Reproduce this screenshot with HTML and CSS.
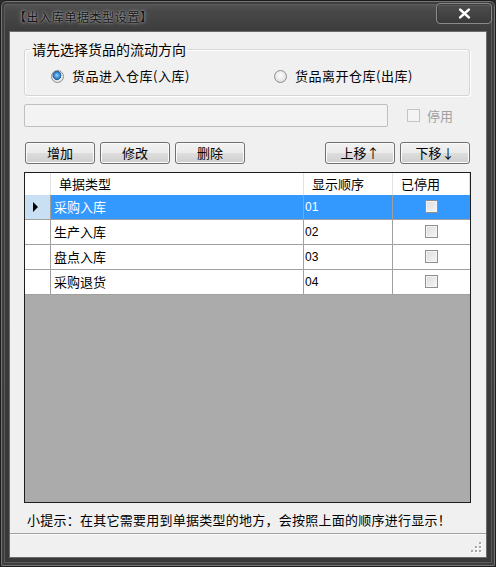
FILE: index.html
```html
<!DOCTYPE html>
<html lang="zh-CN">
<head>
<meta charset="utf-8">
<title>出入库单据类型设置</title>
<link rel="stylesheet" href="styles.css">
</head>
<body>
<div class="win">
  <div class="titlebar">
    <span class="title">【出入库单据类型设置】</span>
    <span class="close"><svg width="13" height="11" viewBox="0 0 13 11"><path d="M2.2 1.6 L10.8 9.4 M10.8 1.6 L2.2 9.4" stroke="#fff" stroke-width="2.6" stroke-linecap="round"/></svg></span>
  </div>
  <div class="client">
    <fieldset class="group">
      <legend>请先选择货品的流动方向</legend>
      <div class="radios">
        <label class="opt"><span class="radio on"></span>货品进入仓库(入库)</label>
        <label class="opt"><span class="radio"></span>货品离开仓库(出库)</label>
      </div>
    </fieldset>
    <div class="namerow">
      <div class="textbox"></div>
      <span class="chk dis"></span><span class="dislabel">停用</span>
    </div>
    <div class="btnrow">
      <button class="btn">增加</button>
      <button class="btn">修改</button>
      <button class="btn">删除</button>
      <span class="spacer"></span>
      <button class="btn">上移↑</button>
      <button class="btn">下移↓</button>
    </div>
    <div class="grid">
      <div class="gtable">
        <div class="hc corner"></div>
        <div class="hc">单据类型</div>
        <div class="hc">显示顺序</div>
        <div class="hc">已停用</div>

        <div class="rh sel"><svg width="6" height="10" viewBox="0 0 6 10"><path d="M0 0 L5 5 L0 10 Z" fill="#000"/></svg></div>
        <div class="dc sel">采购入库</div>
        <div class="dc sel num">01</div>
        <div class="dc sel ck"><span class="chk cell"></span></div>

        <div class="rh"></div>
        <div class="dc">生产入库</div>
        <div class="dc num">02</div>
        <div class="dc ck"><span class="chk cell"></span></div>

        <div class="rh"></div>
        <div class="dc">盘点入库</div>
        <div class="dc num">03</div>
        <div class="dc ck"><span class="chk cell"></span></div>

        <div class="rh"></div>
        <div class="dc">采购退货</div>
        <div class="dc num">04</div>
        <div class="dc ck"><span class="chk cell"></span></div>
      </div>
    </div>
    <div class="tip">小提示：在其它需要用到单据类型的地方，会按照上面的顺序进行显示！</div>
    <div class="status">
      <svg class="grip" width="12" height="12" viewBox="0 0 12 12">
        <g fill="#fff">
          <rect x="9" y="1" width="2" height="2"/><rect x="5" y="5" width="2" height="2"/><rect x="9" y="5" width="2" height="2"/>
          <rect x="1" y="9" width="2" height="2"/><rect x="5" y="9" width="2" height="2"/><rect x="9" y="9" width="2" height="2"/>
        </g>
        <g fill="#a8a8a8">
          <rect x="8" y="0" width="2" height="2"/><rect x="4" y="4" width="2" height="2"/><rect x="8" y="4" width="2" height="2"/>
          <rect x="0" y="8" width="2" height="2"/><rect x="4" y="8" width="2" height="2"/><rect x="8" y="8" width="2" height="2"/>
        </g>
      </svg>
    </div>
  </div>
</div>
</body>
</html>
```
FILE: styles.css
```css
* { box-sizing: border-box; }
html, body { margin: 0; padding: 0; }
body {
  width: 496px;
  height: 567px;
  overflow: hidden;
  background: #2a2a2a;
  font-family: "Noto Sans CJK SC", "Liberation Sans", sans-serif;
  font-size: 13px;
  color: #000;
}
.win {
  width: 496px;
  height: 567px;
  display: flex;
  flex-direction: column;
  padding: 0 9px 9px;
  border: 1px solid #1c1c1c;
  border-radius: 6px 6px 2px 2px;
  background: linear-gradient(#5a5a5a 0, #484848 10px, #3c3c3c 31px, #393939 100%);
  box-shadow: inset 0 0 0 1px #747474, inset 0 0 0 3px #3e3e3e, inset 0 0 0 4px #5a5a5a;
}
.titlebar {
  height: 31px;
  flex: none;
  display: flex;
  align-items: flex-start;
}
.title {
  margin: 7px 0 0 4px;
  font-size: 12px;
  line-height: 17px;
  letter-spacing: 0.6px;
  color: #151515;
  text-shadow: 0 0 2px rgba(190, 190, 190, 0.95), 0 0 5px rgba(160, 160, 160, 0.85);
}
.close {
  margin: 2px -6px 0 auto;
  width: 56px;
  height: 21px;
  border: 1px solid #8a8a8a;
  border-radius: 4px;
  box-shadow: inset 0 0 0 1px #3a3a3a, inset 0 1px 0 1px #5c5c5c;
  background: linear-gradient(#4e4e4e, #3a3a3a);
  display: flex;
  align-items: center;
  justify-content: center;
}
.client {
  flex: 1;
  display: flex;
  flex-direction: column;
  background: #f0f0f0;
  box-shadow: 0 0 0 1px #6c6c6c;
}
.group {
  margin: 9px 16px 0 14px;
  padding: 0;
  border: 1px solid #d5d5d5;
  border-radius: 3px;
  box-shadow: inset 1px 1px 0 #fff, 1px 1px 0 #fff;
}
.group legend {
  margin-left: 5px;
  padding: 0 2px;
  font-size: 14px;
  line-height: 16px;
}
.radios {
  height: 38px;
  display: grid;
  grid-template-columns: 223px auto;
  align-items: center;
  padding-left: 26px;
}
.opt {
  display: flex;
  align-items: center;
  gap: 8px;
  line-height: 16px;
  letter-spacing: 0.5px;
}
.radio {
  width: 13px;
  height: 13px;
  border-radius: 50%;
  border: 1px solid #8e8f8f;
  background: radial-gradient(circle at 50% 40%, #fdfdfd 0, #e6e6e6 60%, #cfcfcf 100%);
  flex: none;
}
.radio.on {
  background:
    radial-gradient(circle at 45% 40%, #9fd3f7 0, #3d8ed6 30%, #1c5c9c 48%, transparent 52%),
    radial-gradient(circle, #f4f4f4 0, #dcdcdc 100%);
}
.namerow {
  margin: 8px 0 0 14px;
  height: 23px;
  display: flex;
  align-items: center;
}
.textbox {
  width: 364px;
  height: 23px;
  border: 1px solid #c0c0c0;
  border-radius: 2px;
  background: #f3f3f3;
}
.chk {
  width: 13px;
  height: 13px;
  flex: none;
  border: 1px solid #8f8f8f;
  background: linear-gradient(135deg, #dcdcdc 0, #f6f6f6 100%);
  box-shadow: inset 0 0 0 1px #f4f4f4;
}
.chk.dis {
  margin-left: 19px;
  border-color: #c4c4c4;
  background: #f4f4f4;
}
.dislabel {
  margin-left: 7px;
  color: #a0a0a0;
  line-height: 16px;
}
.btnrow {
  margin: 15px 16px 0 15px;
  height: 22px;
  display: flex;
  gap: 5px;
}
.spacer { flex: 1; }
.btn {
  width: 70px;
  height: 22px;
  padding: 0;
  font-family: inherit;
  font-size: 13px;
  line-height: 16px;
  color: #000;
  border: 1px solid #707070;
  border-radius: 3px;
  background: linear-gradient(#f2f2f2 0, #ebebeb 48%, #dddddd 52%, #cfcfcf 100%);
  box-shadow: inset 0 0 0 1px #fbfbfb;
}
.grid {
  margin: 8px 0 0 14px;
  width: 447px;
  height: 331px;
  flex: none;
  border: 1px solid #1e1e1e;
  background: #ababab;
}
.gtable {
  display: grid;
  grid-template-columns: 26px 253px 89px 77px;
  grid-template-rows: 22px repeat(4, 25px);
}
.hc {
  background: #fff;
  border-right: 1px solid #e2e2e2;
  padding-left: 8px;
  line-height: 21px;
}
.hc.corner { padding: 0; }
.hc:last-child { border-right: 0; }
.rh {
  background: #fff;
  border-right: 1px solid #a0a0a0;
  border-bottom: 1px solid #a0a0a0;
  display: flex;
  align-items: center;
  padding-left: 8px;
}
.rh.sel { background: #c9e0f4; }
.dc {
  background: #fff;
  border-right: 1px solid #a0a0a0;
  border-bottom: 1px solid #a0a0a0;
  padding-left: 3px;
  line-height: 24px;
}
.dc.num {
  padding-left: 1px;
  font-family: "Liberation Sans", sans-serif;
  font-size: 12px;
}
.dc.sel {
  background: #3399ff;
  color: #fff;
}
.dc.ck {
  border-right: 0;
  display: flex;
  align-items: center;
  justify-content: center;
  padding: 0 0 1px 0;
}
.tip {
  margin: 8px 0 0 17px;
  line-height: 17px;
  letter-spacing: 0.25px;
}
.status {
  margin-top: auto;
  height: 24px;
  border-top: 1px solid #a0a0a0;
  box-shadow: inset 0 1px 0 #fbfbfb;
  display: flex;
  justify-content: flex-end;
  align-items: flex-end;
  padding: 0 3px 3px 0;
}
.grip { display: block; }
```
